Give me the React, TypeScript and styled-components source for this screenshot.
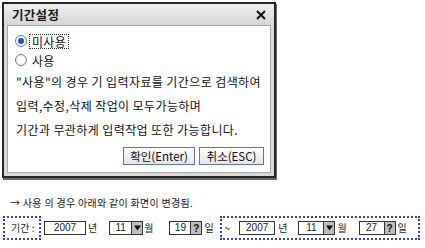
import React from 'react';
import styled, { createGlobalStyle } from 'styled-components';

const Global = createGlobalStyle`
  html, body { margin: 0; padding: 0; background: #fff; }
  body { font-family: "Noto Sans CJK KR", "Noto Sans", sans-serif; color: #111; }
  * { box-sizing: border-box; }
`;

const Page = styled.div`
  width: 425px;
  height: 248px;
  overflow: hidden;
  padding: 2px 0 0 2px;
  display: flex;
  flex-direction: column;
`;

const Dialog = styled.div`
  width: 274px;
  height: 176px;
  border: 2px solid #262626;
  box-shadow: 1px 2px 0 #6a6a6a;
  background: #d8d8d8;
  display: flex;
  flex-direction: column;
`;

const TitleBar = styled.div`
  height: 21px;
  flex: none;
  display: flex;
  align-items: center;
  justify-content: space-between;
  padding: 0 8px 0 8px;
  background: linear-gradient(#efefef, #d6d6d6);
`;

const Title = styled.span`
  font-size: 12.5px;
  font-weight: 700;
  color: #1a1a1a;
  letter-spacing: 0.3px;
`;

const Close = styled.svg`
  width: 10px;
  height: 10px;
  display: block;
`;

const Frame = styled.div`
  flex: 1;
  display: flex;
  padding: 0 3px 3px 3px;
`;

const Body = styled.div`
  flex: 1;
  background: #fff;
  border: 1px solid #a9a9a9;
  padding: 6px 6px 0 8px;
  display: flex;
  flex-direction: column;
`;

const RadioRow = styled.div`
  height: 18px;
  display: flex;
  align-items: center;
  gap: 2px;
  margin-bottom: 1px;
`;

const Radio = styled.span<{ $on?: boolean }>`
  width: 12px;
  height: 12px;
  margin-left: -1px;
  border-radius: 50%;
  border: 1px solid #6f8099;
  background: radial-gradient(circle, #ffffff 40%, #e6e9ee 100%);
  display: flex;
  align-items: center;
  justify-content: center;
  &::after {
    content: '';
    width: 6px;
    height: 6px;
    border-radius: 50%;
    background: ${(p) => (p.$on ? '#2250c8' : 'transparent')};
  }
`;

const RadioLabel = styled.span<{ $focus?: boolean }>`
  font-size: 12px;
  line-height: 13px;
  padding: 0 2px;
  letter-spacing: 0.3px;
  border: 1px dotted ${(p) => (p.$focus ? '#333' : 'transparent')};
`;

const Line = styled.div`
  font-size: 12px;
  line-height: 24px;
  letter-spacing: 0.4px;
  white-space: nowrap;
`;

const Buttons = styled.div`
  display: flex;
  justify-content: flex-end;
  gap: 4px;
  margin-top: 5px;
`;

const Button = styled.button<{ $w: number }>`
  width: ${(p) => p.$w}px;
  height: 18px;
  padding: 0;
  border: 1px solid #5a78a8;
  background: linear-gradient(#ffffff, #e4e4e4);
  font-family: inherit;
  font-size: 11.5px;
  line-height: 16px;
  color: #111;
`;

const Note = styled.div`
  margin: 18px 0 0 8px;
  font-size: 10px;
  line-height: 14px;
  letter-spacing: 0.3px;
  color: #222;
  white-space: nowrap;
`;

const Row = styled.div`
  margin: 6px 0 0 1px;
  display: flex;
  align-items: center;
  height: 24px;
`;

const DotBox = styled.div<{ $w: number; $ml?: number }>`
  width: ${(p) => p.$w}px;
  height: 24px;
  margin-left: ${(p) => p.$ml ?? 0}px;
  border: 2px dotted #2c3fe0;
  display: flex;
  align-items: center;
  padding-left: 2px;
`;

const Txt = styled.span<{ $ml?: number }>`
  font-size: 10px;
  line-height: 14px;
  margin-left: ${(p) => p.$ml ?? 0}px;
  color: #222;
  white-space: nowrap;
`;

const Field = styled.div<{ $ml?: number }>`
  display: flex;
  height: 14px;
  margin-left: ${(p) => p.$ml ?? 0}px;
`;

const Input = styled.div<{ $w: number }>`
  width: ${(p) => p.$w}px;
  height: 14px;
  border: 1px solid #333;
  background: #fff;
  font-size: 10px;
  line-height: 12px;
  text-align: center;
  color: #222;
  font-family: "Liberation Sans", Arial, sans-serif;
`;

const Btn = styled.div`
  width: 11px;
  height: 14px;
  border: 1px solid #333;
  border-left: none;
  background: #bdbdbd;
  display: flex;
  align-items: center;
  justify-content: center;
  font-family: "Liberation Sans", Arial, sans-serif;
  font-size: 10px;
  font-weight: 700;
  color: #111;
`;

const Tri = () => (
  <svg width="7" height="6" viewBox="0 0 7 6">
    <path d="M0 0.5 H7 L3.5 5.5 Z" fill="#111" />
  </svg>
);

export default function App() {
  return (
    <>
      <Global />
      <Page>
        <Dialog>
          <TitleBar>
            <Title>기간설정</Title>
            <Close viewBox="0 0 10 10">
              <path d="M1 1 L9 9 M9 1 L1 9" stroke="#111" strokeWidth="2" />
            </Close>
          </TitleBar>
          <Frame>
            <Body>
              <RadioRow>
                <Radio $on />
                <RadioLabel $focus>미사용</RadioLabel>
              </RadioRow>
              <RadioRow>
                <Radio />
                <RadioLabel>사용</RadioLabel>
              </RadioRow>
              <Line>"사용"의 경우 기 입력자료를 기간으로 검색하여</Line>
              <Line>입력,수정,삭제 작업이 모두가능하며</Line>
              <Line>기간과 무관하게 입력작업 또한 가능합니다.</Line>
              <Buttons>
                <Button $w={72}>확인(Enter)</Button>
                <Button $w={65}>취소(ESC)</Button>
              </Buttons>
            </Body>
          </Frame>
        </Dialog>
        <Note>→ 사용 의 경우 아래와 같이 화면이 변경됨.</Note>
        <Row>
          <DotBox $w={38}>
            <Txt $ml={4}>기간 :</Txt>
          </DotBox>
          <Field $ml={3}>
            <Input $w={42}>2007</Input>
          </Field>
          <Txt $ml={2}>년</Txt>
          <Field $ml={12}>
            <Input $w={23}>11</Input>
            <Btn><Tri /></Btn>
          </Field>
          <Txt $ml={1}>월</Txt>
          <Field $ml={16}>
            <Input $w={22}>19</Input>
            <Btn>?</Btn>
          </Field>
          <Txt $ml={2}>일</Txt>
          <DotBox $w={200} $ml={6}>
            <Txt $ml={1}>~</Txt>
            <Field $ml={9}>
              <Input $w={36}>2007</Input>
            </Field>
            <Txt $ml={3}>년</Txt>
            <Field $ml={11}>
              <Input $w={26}>11</Input>
              <Btn><Tri /></Btn>
            </Field>
            <Txt $ml={2}>월</Txt>
            <Field $ml={12}>
              <Input $w={26}>27</Input>
              <Btn>?</Btn>
            </Field>
            <Txt $ml={2}>일</Txt>
          </DotBox>
        </Row>
      </Page>
    </>
  );
}
